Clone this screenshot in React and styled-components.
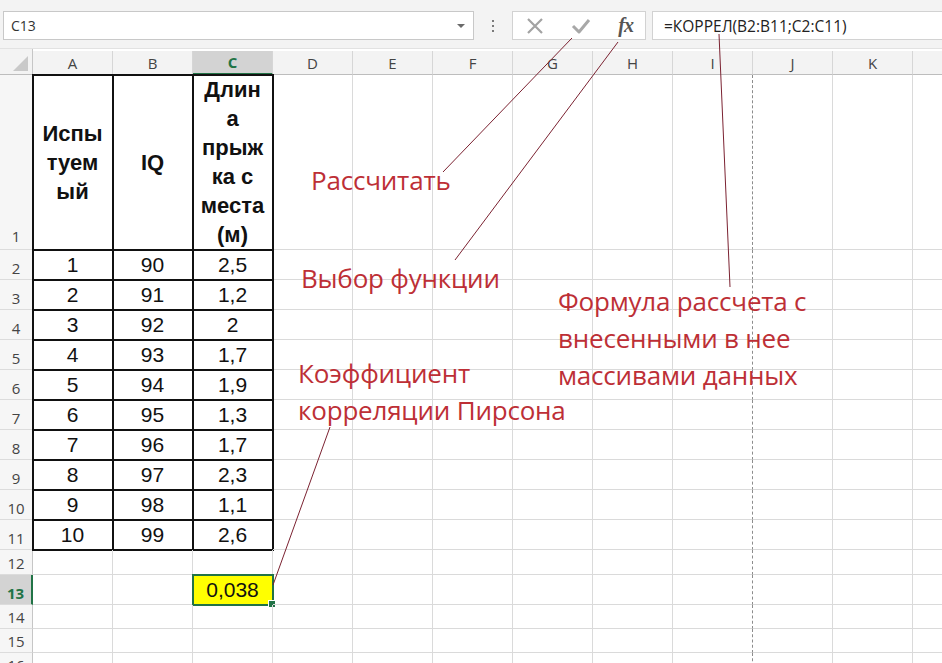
import React from "react";
import styled, { createGlobalStyle } from "styled-components";

const GlobalStyle = createGlobalStyle`
  html, body {
    margin: 0;
    padding: 0;
    background: #ffffff;
    overflow: hidden;
  }
  * {
    box-sizing: border-box;
  }
`;

const Page = styled.div`
  position: relative;
  width: 942px;
  height: 663px;
  overflow: hidden;
  background: #ffffff;
  font-family: "Open Sans", "Noto Sans", sans-serif;
`;

const Toolbar = styled.div`
  height: 49px;
  background: #f3f3f3;
  display: flex;
  align-items: flex-start;
  padding: 11px 0 0 3px;
  border-bottom: 1px solid #e2e2e2;
`;

const NameBox = styled.div`
  width: 471px;
  height: 29px;
  background: #fff;
  border: 1px solid #c8c8c8;
  display: flex;
  align-items: center;
  justify-content: space-between;
  padding: 0 8px 0 7px;
  font-size: 14px;
  color: #333;
`;

const Caret = styled.span`
  width: 0;
  height: 0;
  border-left: 4px solid transparent;
  border-right: 4px solid transparent;
  border-top: 4px solid #6a6a6a;
`;

const Dots = styled.div`
  width: 38px;
  height: 29px;
  display: flex;
  flex-direction: column;
  align-items: center;
  justify-content: center;
  gap: 3px;
  & span {
    width: 2px;
    height: 2px;
    background: #7a7a7a;
  }
`;

const IconBox = styled.div`
  width: 134px;
  height: 29px;
  background: #fff;
  border: 1px solid #d2d2d2;
  display: flex;
  align-items: center;
  padding: 0 12px 0 13px;
  justify-content: space-between;
`;

const Fx = styled.span`
  font-family: "Liberation Serif", "DejaVu Serif", serif;
  font-style: italic;
  font-weight: bold;
  font-size: 20px;
  color: #555;
  letter-spacing: -1px;
`;

const FormulaInput = styled.div`
  margin-left: 6px;
  flex: 1;
  height: 29px;
  background: #fff;
  border: 1px solid #d2d2d2;
  border-right: none;
  display: flex;
  align-items: center;
  padding-left: 11px;
  font-size: 15.5px;
  color: #222;
`;

const Grid = styled.div`
  display: grid;
  grid-template-columns: 33px repeat(12, 80px);
  grid-template-rows: 26px 175px repeat(10, 30px) 25px 30px 24px 24px 24px;
`;

const Corner = styled.div`
  background: #f3f3f3;
  border-right: 1px solid #c6c6c6;
  border-bottom: 1px solid #bdbdbd;
  position: relative;
  &::after {
    content: "";
    position: absolute;
    right: 4px;
    bottom: 3px;
    width: 0;
    height: 0;
    border-left: 15px solid transparent;
    border-bottom: 15px solid #c9c9c9;
  }
`;

const ColHeader = styled.div`
  background: ${(p) => (p.$active ? "#d3d3d3" : "#f3f3f3")};
  color: ${(p) => (p.$active ? "#217346" : "#444")};
  font-weight: ${(p) => (p.$active ? 700 : 400)};
  border-right: 1px solid #d6d6d6;
  border-bottom: ${(p) => (p.$active ? "2px solid #217346" : "1px solid #bdbdbd")};
  margin-top: 2px;
  display: flex;
  align-items: center;
  justify-content: center;
  font-size: 15px;
`;

const RowHeader = styled.div`
  background: ${(p) => (p.$active ? "#d3d3d3" : "#f6f6f6")};
  color: ${(p) => (p.$active ? "#217346" : "#444")};
  font-weight: ${(p) => (p.$active ? 700 : 400)};
  border-right: ${(p) => (p.$active ? "2px solid #217346" : "1px solid #c6c6c6")};
  border-bottom: 1px solid #dcdcdc;
  display: flex;
  align-items: flex-end;
  justify-content: center;
  padding-bottom: ${(p) => (p.$tall ? "3px" : "1px")};
  font-size: 15px;
`;

const Cell = styled.div`
  position: relative;
  border-right: ${(p) => (p.$dashed ? "1px dashed #8c8c8c" : "1px solid #dadada")};
  border-bottom: 1px solid #dadada;
  display: flex;
  align-items: center;
  justify-content: center;
  text-align: center;
  white-space: pre-line;
  font-family: "Liberation Sans", Arial, sans-serif;
  font-size: ${(p) => (p.$bold ? "22px" : "21px")};
  line-height: 29px;
  font-weight: ${(p) => (p.$bold ? 700 : 400)};
  color: #111;
  background: ${(p) => (p.$selected ? "#ffff00" : "transparent")};
  outline: ${(p) =>
    p.$boxed ? "2px solid #111" : p.$selected ? "2px solid #217346" : "none"};
  outline-offset: -1px;
  ${(p) =>
    p.$selected &&
    `
    &::after {
      content: "";
      position: absolute;
      right: -4px;
      bottom: -4px;
      width: 6px;
      height: 6px;
      background: #217346;
      border: 1px solid #fff;
    }
  `}
`;

const Overlay = styled.svg`
  position: absolute;
  left: 0;
  top: 0;
  width: 942px;
  height: 663px;
  pointer-events: none;
`;

const Note = styled.div`
  position: absolute;
  left: ${(p) => p.$x}px;
  top: ${(p) => p.$y}px;
  color: #bd2f36;
  font-family: "Open Sans", "Noto Sans", sans-serif;
  font-size: 26px;
  line-height: 37px;
  white-space: pre;
  letter-spacing: -0.2px;
`;

const COLS = ["A", "B", "C", "D", "E", "F", "G", "H", "I", "J", "K", "L"];

const table = [
  ["Испы\nтуем\nый", "IQ", "Длин\nа\nпрыж\nка с\nместа\n(м)"],
  ["1", "90", "2,5"],
  ["2", "91", "1,2"],
  ["3", "92", "2"],
  ["4", "93", "1,7"],
  ["5", "94", "1,9"],
  ["6", "95", "1,3"],
  ["7", "96", "1,7"],
  ["8", "97", "2,3"],
  ["9", "98", "1,1"],
  ["10", "99", "2,6"],
];

const XIcon = () => (
  <svg width="18" height="18" viewBox="0 0 18 18">
    <path d="M2 2 L16 16 M16 2 L2 16" stroke="#a3a3a3" strokeWidth="2.2" fill="none" />
  </svg>
);

const CheckIcon = () => (
  <svg width="20" height="18" viewBox="0 0 20 18">
    <path d="M2 9 L8 15 L18 3" stroke="#a8a8a8" strokeWidth="3" fill="none" strokeLinejoin="round" />
  </svg>
);

const App = () => {
  const rows = [];
  for (let r = 1; r <= 16; r++) {
    rows.push(
      <RowHeader key={"h" + r} $active={r === 13} $tall={r === 1}>
        {r}
      </RowHeader>
    );
    COLS.forEach((c, ci) => {
      const inTable = r <= 11 && ci < 3;
      const selected = r === 13 && c === "C";
      rows.push(
        <Cell
          key={c + r}
          $boxed={inTable}
          $bold={r === 1 && inTable}
          $selected={selected}
          $dashed={c === "I"}
        >
          {inTable ? table[r - 1][ci] : selected ? "0,038" : ""}
        </Cell>
      );
    });
  }

  return (
    <Page>
      <GlobalStyle />
      <Toolbar>
        <NameBox>
          <span>C13</span>
          <Caret />
        </NameBox>
        <Dots>
          <span />
          <span />
          <span />
        </Dots>
        <IconBox>
          <XIcon />
          <CheckIcon />
          <Fx>fx</Fx>
        </IconBox>
        <FormulaInput>=КОРРЕЛ(B2:B11;C2:C11)</FormulaInput>
      </Toolbar>
      <Grid>
        <Corner />
        {COLS.map((c) => (
          <ColHeader key={c} $active={c === "C"}>
            {c}
          </ColHeader>
        ))}
        {rows}
      </Grid>

      <Overlay viewBox="0 0 942 663">
        <g stroke="#7b2231" strokeWidth="1" fill="none">
          <line x1="572" y1="38" x2="443" y2="172" />
          <line x1="618" y1="42" x2="455" y2="260" />
          <line x1="719" y1="34" x2="730" y2="287" />
          <line x1="330" y1="427" x2="273" y2="585" />
        </g>
      </Overlay>
      <Note $x={311} $y={162}>Рассчитать</Note>
      <Note $x={301} $y={260}>Выбор функции</Note>
      <Note $x={558} $y={283}>{"Формула рассчета с\nвнесенными в нее\nмассивами данных"}</Note>
      <Note $x={298} $y={355}>{"Коэффициент\nкорреляции Пирсона"}</Note>
    </Page>
  );
};

export default App;
